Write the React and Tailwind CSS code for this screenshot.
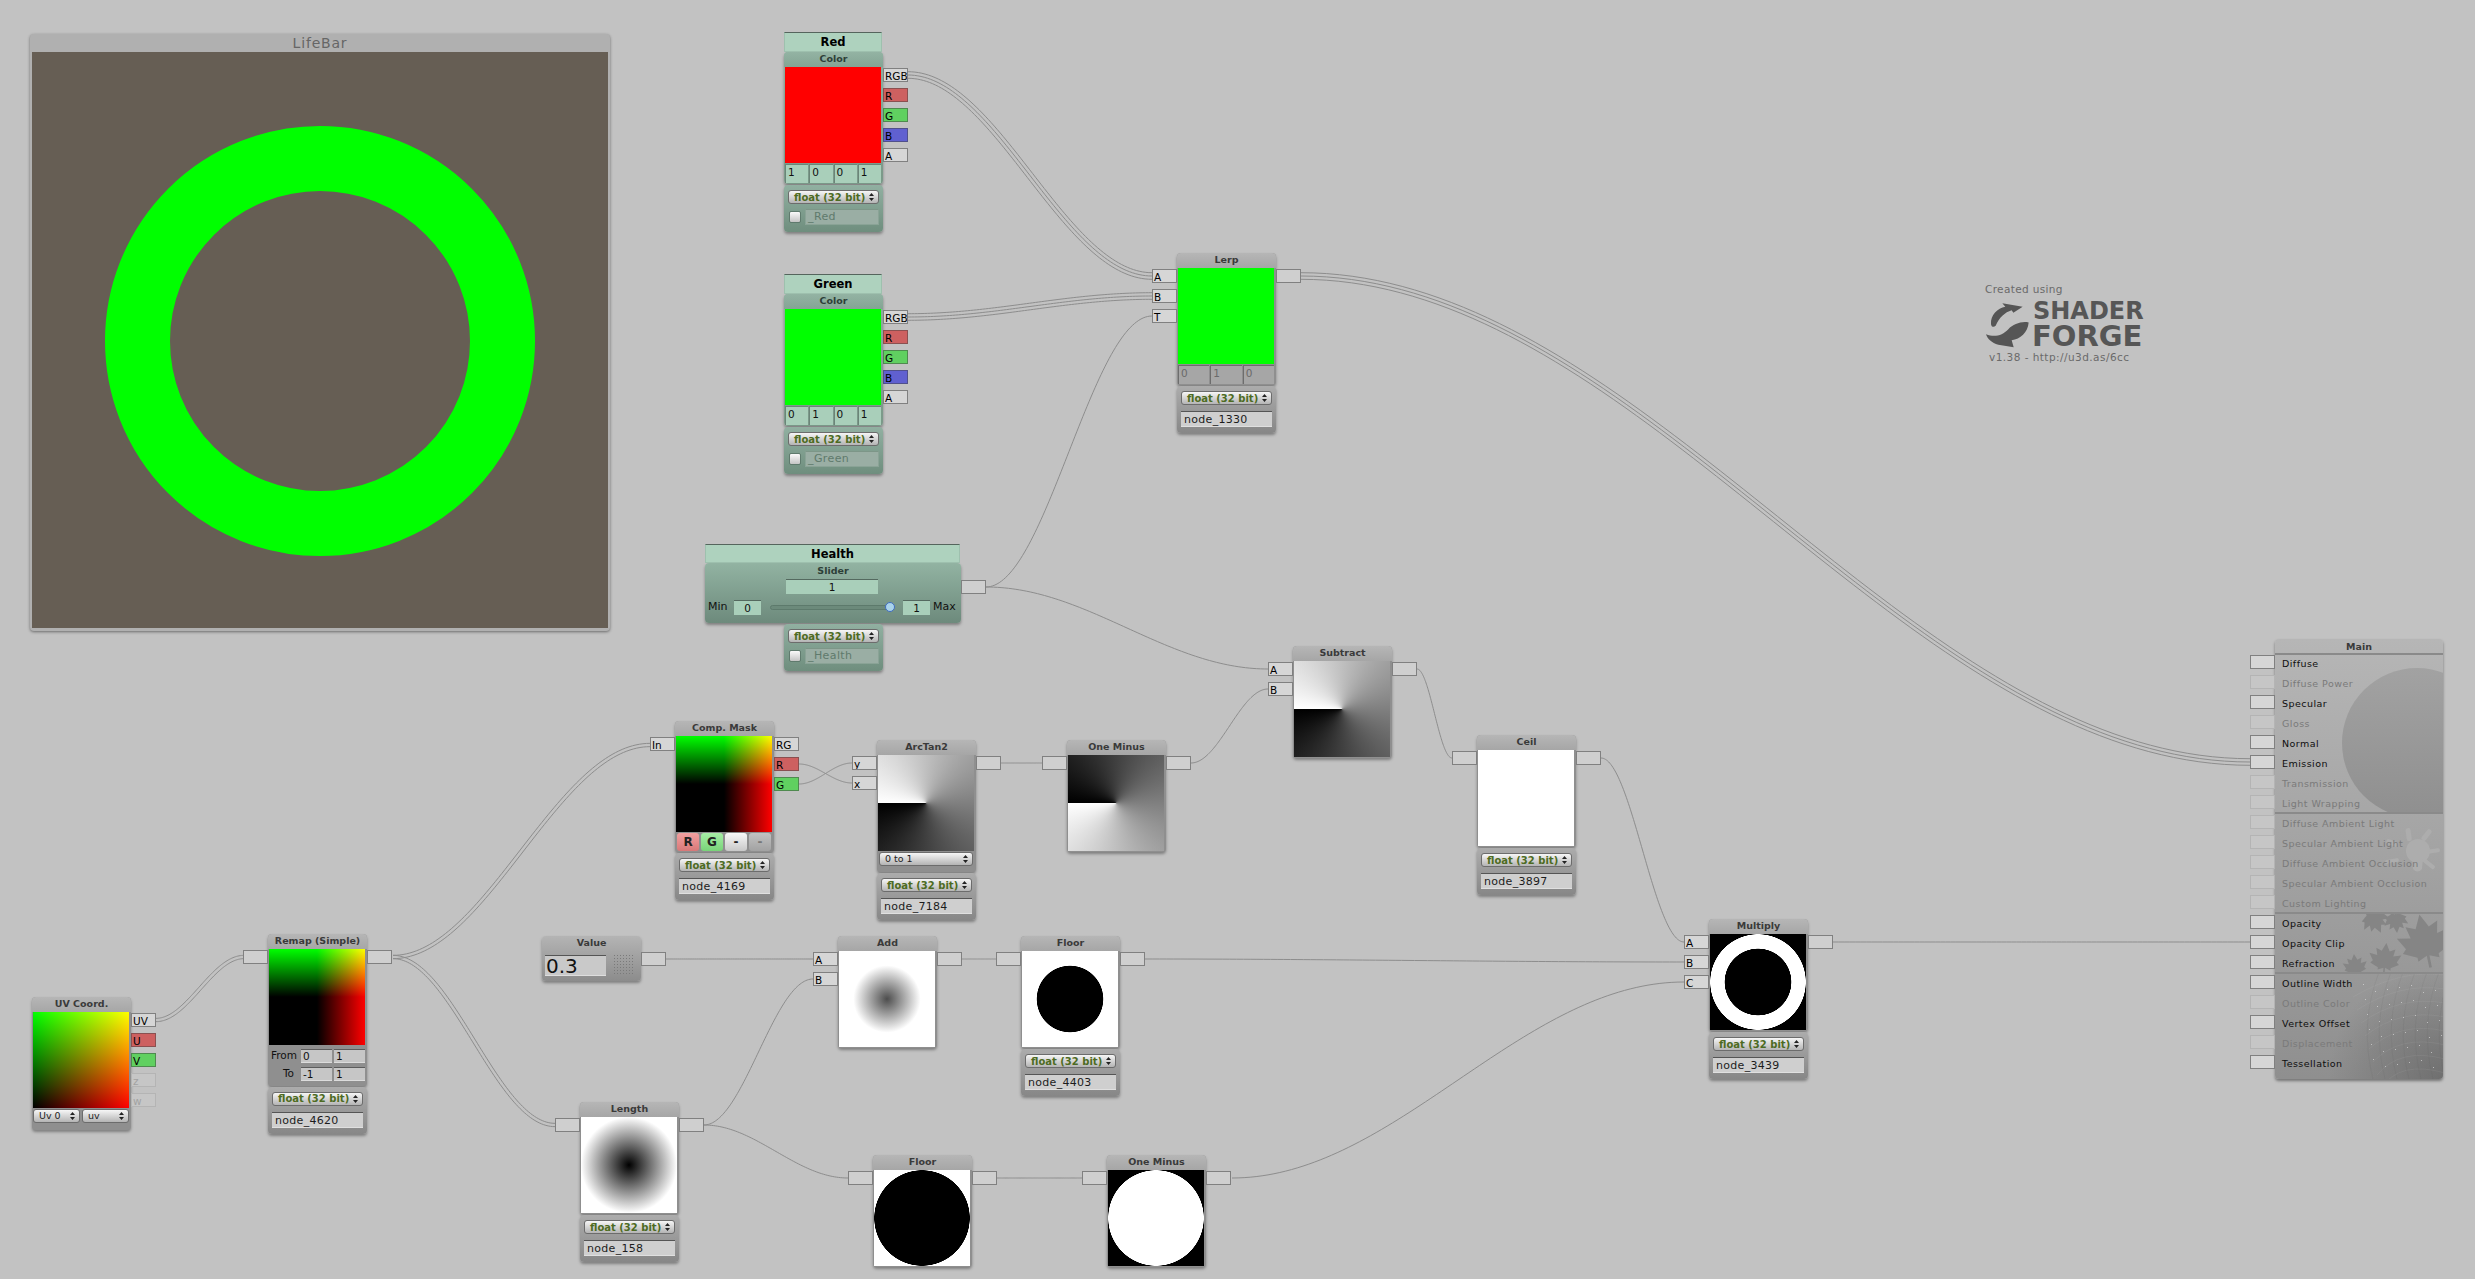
import React from 'react';

function wirePoints(x1, y1, x2, y2) {
  const k = (x2 - x1) * 0.36;
  const out = [];
  for (let i = 0; i <= 80; i++) {
    const t = i / 80, u = 1 - t;
    const x = u*u*u*x1 + 3*u*u*t*(x1+k) + 3*u*t*t*(x2-k) + t*t*t*x2;
    const y = u*u*u*y1 + 3*u*u*t*y1 + 3*u*t*t*y2 + t*t*t*y2;
    const dx = 3*u*u*k + 6*u*t*(x2-k-x1-k) + 3*t*t*k;
    const dy = 6*u*t*(y2-y1);
    const l = Math.hypot(dx, dy) || 1;
    out.push([x, y, -dy/l, dx/l]);
  }
  return out;
}

function Wire({ a, b, n = 1 }) {
  const pts = wirePoints(a[0], a[1], b[0], b[1]);
  const gap = 3.3;
  return Array.from({ length: n }, (_, j) => {
    const off = (j - (n - 1) / 2) * gap;
    const d = pts.map((p, i) => `${i ? 'L' : 'M'}${(p[0]+p[2]*off).toFixed(2)} ${(p[1]+p[3]*off).toFixed(2)}`).join(' ');
    return <path key={j} d={d} fill="none" stroke="#8d8d8d" strokeWidth="1" />;
  });
}

const WIRES = [
  [[908,75],[1152,276],3],[[908,317],[1152,296],3],[[986,587],[1152,316],1],[[986,587],[1268,669],1],
  [[1301,276],[2250,762],3],[[156,1020],[244,957],2],[[393,957],[650,745],2],[[393,957],[555,1125],2],
  [[799,764],[852,783],1],[[799,784],[852,763],1],[[1001,763],[1042,763],1],[[1191,763],[1268,689],1],
  [[1417,669],[1452,758],1],[[1601,758],[1684,942],1],[[666,959],[813,959],1],[[704,1125],[813,979],1],
  [[704,1125],[848,1178],1],[[961,959],[996,959],1],[[1145,959],[1684,962],1],[[997,1178],[1082,1178],1],
  [[1232,1178],[1684,982],1],[[1833,942],[2250,942],1],
];

const PORT_COLORS = {
  w: 'bg-[#d6d6d6] border-[#808080] text-black',
  r: 'bg-[#cd6060] border-[#8a5050] text-black',
  g: 'bg-[#60d060] border-[#4f8a4f] text-black',
  b: 'bg-[#6060d0] border-[#50508a] text-black',
  f: 'bg-[#c6c6c6] border-[#b4b4b4] text-[#a2a2a2]',
  d: 'bg-[#cfcfcf] border-[#808080] text-black',
};

function Port({ label = '', kind = 'd' }) {
  return (
    <div className={`w-[25px] h-[14px] border ${PORT_COLORS[kind]} text-[10.5px] leading-[15px] pl-[1px] overflow-hidden box-border`}>
      {label}
    </div>
  );
}

function Ports({ items, side }) {
  return (
    <div className={side === 'in' ? 'absolute right-full top-[16px] flex flex-col gap-[6px]' : 'absolute left-full top-[16px] flex flex-col gap-[6px]'}>
      {items.map((p, i) => <Port key={i} label={p[0]} kind={p[1]} />)}
    </div>
  );
}

function Arrows({ className = '' }) {
  return (
    <svg width="5" height="8" viewBox="0 0 5 8" className={className}>
      <path d="M2.5 0 L5 3 H0 Z M2.5 8 L0 5 H5 Z" fill="#222" />
    </svg>
  );
}

function Select({ children, className = '', green }) {
  return (
    <div className={`h-[14px] rounded-[3px] border border-[#6c6c6c] bg-[linear-gradient(#f6f6f6,#b4b4b4)] flex items-center justify-between pr-[4px] box-border ${className} ${green ? 'text-[#4d6b22] font-bold text-[10px] pl-[5px]' : 'text-[#222] text-[9.5px] pl-[5px]'}`}>
      <span className="whitespace-nowrap">{children}</span>
      <Arrows />
    </div>
  );
}

function FloatPanel({ name, prop }) {
  const skin = prop
    ? 'bg-[linear-gradient(#91b0a1,#6f8e7e)]'
    : 'bg-[linear-gradient(#acacac,#878787)]';
  return (
    <div className={`h-[47px] w-[99px] mt-px rounded-[4px] pt-[5px] px-[4px] box-border shadow-[0_2px_3px_rgba(0,0,0,0.35)] ${skin}`}>
      <Select green>float (32 bit)</Select>
      {prop ? (
        <div className="mt-[5px] flex items-center gap-[4px] pl-[1px]">
          <div className="w-[12px] h-[12px] rounded-[2px] border border-[#5f7a6d] bg-[linear-gradient(#fafafa,#c4c4c4)] box-border" />
          <div className="w-[74px] h-[16px] bg-[#9aaea4] border border-[#8aa396] border-t-[#7d9688] text-[#5f7a6c] text-[11px] leading-[14px] pl-[2px] tracking-[0.4px] box-border">{name}</div>
        </div>
      ) : (
        <div className="mt-[6px] h-[16px] bg-[#cfcfcf] border-t border-t-[#555] border-b border-b-[#e0e0e0] text-[#1c1c1c] text-[11px] leading-[15px] pl-[3px] tracking-[0.3px] box-border">{name}</div>
      )}
    </div>
  );
}

function Title({ children, prop }) {
  return (
    <div className={`h-[15px] rounded-t-[4px] text-center text-[9.5px] font-bold leading-[14px] ${prop ? 'bg-[linear-gradient(#93b3a3,#84a494)] text-[#2e3f38]' : 'bg-[linear-gradient(#b6b6b6,#a6a6a6)] text-[#3a3a3a]'}`}>{children}</div>
  );
}

function Node({ pos, title, ins, outs, image, children, panel, prop, label }) {
  return (
    <div className={`absolute w-[99px] ${pos}`}>
      {label && (
        <div className="absolute bottom-full left-0 w-[98px] h-[20px] border border-[#9ec0ae] border-t-[#55655d] bg-[#aed2be] text-center text-[11.5px] font-bold text-black leading-[19px] box-border">{label}</div>
      )}
      <div className={`rounded-[4px] pb-px shadow-[0_2px_3px_rgba(0,0,0,0.35)] ${prop ? 'bg-[linear-gradient(#8faf9f,#7a9888)]' : 'bg-[#8f8f8f]'}`}>
        <Title prop={prop}>{title}</Title>
        <div className={`ml-px w-[96px] h-[96px] relative overflow-hidden ${image}`} />
        {children}
      </div>
      {ins && <Ports items={ins} side="in" />}
      {outs && <Ports items={outs} side="out" />}
      {panel && <FloatPanel name={panel} prop={prop} />}
    </div>
  );
}

function Cells({ vals, prop }) {
  return (
    <div className="ml-px h-[20px] flex gap-px pt-px">
      {vals.map((v, i) => (
        <div key={i} className={`flex-1 h-[19px] border-t border-l box-border text-[10.5px] leading-[15px] pl-[2px] ${prop ? 'bg-[#a9cfba] border-[#6b8578] text-[#111]' : 'bg-[#a6a6a6] border-[#6d6d6d] text-[#6a6a6a]'} ${i === vals.length - 1 ? 'mr-[2px]' : ''}`}>{v}</div>
      ))}
    </div>
  );
}

function Field({ children, className = '' }) {
  return <div className={`h-[14px] bg-[#c6c6c6] border-t border-t-[#5c5c5c] border-b border-b-[#dcdcdc] text-[#111] text-[10.5px] leading-[13px] pl-[2px] box-border ${className}`}>{children}</div>;
}

function MaskBtn({ label, skin }) {
  return <div className={`w-[22px] h-[18px] rounded-[3px] text-center font-bold text-[12px] leading-[18px] text-[#222] ${skin}`}>{label}</div>;
}

const IMG = {
  uv: 'bg-[linear-gradient(to_right,#000,#f00),linear-gradient(to_top,#000,#0f0)] bg-blend-screen',
  remap: 'bg-[linear-gradient(to_right,#000_50%,#f00),linear-gradient(to_top,#000_50%,#0f0)] bg-blend-screen',
  red: 'bg-[#ff0000]',
  green: 'bg-[#00ff00]',
  white: 'bg-white',
  atan: 'bg-[conic-gradient(from_270deg,#fff,#000)]',
  oneMinus: 'bg-[conic-gradient(from_270deg,#000,#fff)]',
  length: 'bg-[radial-gradient(circle_48px,#000,#fff)]',
  add: 'bg-[radial-gradient(circle_33.6px,#4d4d4d,#fff)]',
  floor: 'bg-[radial-gradient(circle_33.6px,#000_98%,#fff_100%)]',
  floor2: 'bg-[radial-gradient(circle_48px,#000_99%,#fff_100%)]',
  om2: 'bg-[radial-gradient(circle_48px,#fff_99%,#000_100%)]',
  ring: 'bg-[radial-gradient(circle_48px,#000_69%,#fff_70%,#fff_99%,#000_100%)]',
};

const MAIN_ROWS = [
  ['Diffuse', 1], ['Diffuse Power', 0], ['Specular', 1], ['Gloss', 0], ['Normal', 1], ['Emission', 1], ['Transmission', 0], ['Light Wrapping', 0],
  ['Diffuse Ambient Light', 0], ['Specular Ambient Light', 0], ['Diffuse Ambient Occlusion', 0], ['Specular Ambient Occlusion', 0], ['Custom Lighting', 0],
  ['Opacity', 1], ['Opacity Clip', 1], ['Refraction', 1], ['Outline Width', 1], ['Outline Color', 0], ['Vertex Offset', 1], ['Displacement', 0], ['Tessellation', 1],
];

const LEAF = 'M0,-20 L5,-10 L12,-13 L10,-4 L20,-6 L15,3 L18,6 L8,11 L8,14 L1,11 L1,20 L-1,20 L-1,11 L-8,14 L-8,11 L-18,6 L-15,3 L-20,-6 L-10,-4 L-12,-13 L-5,-10 Z';

function MainArt() {
  const meshLines = [];
  for (let i = 0; i < 9; i++) {
    const y = 340 + i * 13;
    meshLines.push(<path key={`h${i}`} d={`M${78 + i * 4} ${y + 18} Q 125 ${y - 10} 170 ${y - 4 + i}`} fill="none" stroke="#c8c8c8" strokeOpacity="0.18" strokeWidth="0.6" />);
    const x = 90 + i * 12;
    meshLines.push(<path key={`v${i}`} d={`M${x + 14} 333 Q ${x - 6} 385 ${x + 8} 440`} fill="none" stroke="#555" strokeOpacity="0.16" strokeWidth="0.6" />);
    for (let j = 0; j < 6; j++) {
      meshLines.push(<rect key={`d${i}-${j}`} x={x + j * 2 - 2} y={345 + j * 15 + ((i * 7) % 9)} width="1" height="1" fill="#e6e6e6" fillOpacity="0.6" />);
    }
  }
  return (
    <svg width="168" height="440" viewBox="0 0 168 440" className="absolute left-0 top-0">
      <defs>
        <linearGradient id="sph" x1="0" y1="0" x2="0" y2="1">
          <stop offset="0" stopColor="#a2a2a2" /><stop offset="1" stopColor="#8f8f8f" />
        </linearGradient>
        <radialGradient id="dark" gradientUnits="userSpaceOnUse" cx="168" cy="440" r="115">
          <stop offset="0" stopColor="#6a6a6a" stopOpacity="0.85" /><stop offset="1" stopColor="#6a6a6a" stopOpacity="0" />
        </radialGradient>
        <clipPath id="c1"><rect x="0" y="15" width="168" height="158" /></clipPath>
        <clipPath id="c2"><rect x="0" y="275" width="168" height="58" /></clipPath>
        <clipPath id="c3"><rect x="0" y="335" width="168" height="105" /></clipPath>
      </defs>
      <g clipPath="url(#c1)"><circle cx="142" cy="104" r="75" fill="url(#sph)" /></g>
      <g fill="#adadad">
        <rect x="-9" y="-2.5" width="12" height="5" rx="2" transform="translate(120 205) rotate(20)" />
        <rect x="-2.5" y="-9" width="5" height="13" rx="2" transform="translate(134 198) rotate(-8)" />
        <rect x="-2.5" y="-9" width="5" height="13" rx="2" transform="translate(150 198) rotate(38)" />
        <rect x="-7" y="-2" width="14" height="4" rx="2" transform="translate(158 212) rotate(-8)" />
        <rect x="-7" y="-2" width="14" height="4" rx="2" transform="translate(154 225) rotate(38)" />
        <rect x="-7" y="-2" width="14" height="4" rx="2" transform="translate(117 222) rotate(-10)" />
        <circle cx="143" cy="212" r="12" />
        <path d="M137 218 h11 l-1 12 q-4.5 5 -9 0 Z" />
      </g>
      <g fill="#858585" clipPath="url(#c2)">
        <path d={LEAF} transform="translate(150 302) rotate(-12) scale(1.35)" />
        <path d={LEAF} transform="translate(100 281) rotate(155) scale(0.7)" />
        <path d={LEAF} transform="translate(121 282) rotate(175) scale(0.6)" />
        <path d={LEAF} transform="translate(110 320) rotate(5) scale(0.8)" />
        <path d={LEAF} transform="translate(80 327) rotate(-5) scale(0.6)" />
      </g>
      <g clipPath="url(#c3)">
        <rect x="0" y="333" width="168" height="107" fill="url(#dark)" />
        {meshLines}
      </g>
    </svg>
  );
}

function MainNode() {
  return (
    <div className="absolute left-[2275px] top-[639px] w-[168px]">
      <div className="relative h-[440px] rounded-[4px] overflow-hidden bg-[linear-gradient(#b6b6b6,#8f8f8f)] shadow-[0_2px_3px_rgba(0,0,0,0.4)]">
        <MainArt />
        <div className="relative h-[15px] text-center text-[9.5px] font-bold leading-[15px] text-[#3a3a3a]">Main</div>
        <div className="absolute left-0 right-0 top-[14px] h-[2px] bg-[#8a8a8a]" />
        <div className="absolute left-0 right-0 top-[173px] h-[2px] bg-[#8a8a8a]" />
        <div className="absolute left-0 right-0 top-[273px] h-[2px] bg-[#8a8a8a]" />
        <div className="absolute left-0 right-0 top-[333px] h-[2px] bg-[#8a8a8a]" />
        <div className="relative flex flex-col pl-[7px]">
          {MAIN_ROWS.map(([t, on]) => (
            <div key={t} className={`h-[20px] text-[9.5px] leading-[19px] tracking-[0.45px] whitespace-nowrap ${on ? 'text-[#0e0e0e]' : 'text-[#7a7a7a]'}`}>{t}</div>
          ))}
        </div>
      </div>
      <div className="absolute right-full top-[16px] flex flex-col gap-[6px]">
        {MAIN_ROWS.map(([t, on]) => <Port key={t} kind={on ? 'w' : 'f'} />)}
      </div>
    </div>
  );
}

function Logo() {
  return (
    <div className="absolute left-[1985px] top-[283px] w-[160px] text-[#565656]">
      <div className="text-[10.5px] leading-[13px] text-[#6a6a6a] tracking-[0.35px]">Created using</div>
      <div className="relative h-[48px] mt-[4px]">
        <svg width="44" height="46" viewBox="70 95 132 135" className="absolute left-0 top-[2px]">
          <path fill="#555" d="M88 160 C86 132 108 113 131 108 L122 97 L183 108 L155 126 L150 118 C130 124 112 140 102 165 C96 170 89 168 88 160 Z" />
          <path fill="#555" d="M73 190 C100 201 122 193 140 175 C155 160 180 150 201 155 C198 186 176 205 150 208 L156 229 L110 222 C90 215 78 205 73 190 Z" />
        </svg>
        <div className="absolute left-[48px] top-[1px] text-[24px] leading-[20px] font-bold">SHADER</div>
        <div className="absolute left-[47px] top-[24px] text-[29px] leading-[24px] font-bold">FORGE</div>
      </div>
      <div className="mt-[3px] ml-[4px] text-[10.5px] leading-[12px] text-[#6a6a6a] whitespace-nowrap tracking-[0.45px]">v1.38 - http://u3d.as/6cc</div>
    </div>
  );
}

export default function App() {
  return (
    <div className="relative w-[2475px] h-[1279px] overflow-hidden bg-[#c2c2c2] [font-family:'DejaVu_Sans',sans-serif]">
      <svg width="2475" height="1279" className="absolute left-0 top-0">
        {WIRES.map((w, i) => <Wire key={i} a={w[0]} b={w[1]} n={w[2]} />)}
      </svg>

      {/* Preview window */}
      <div className="absolute left-[30px] top-[34px] w-[580px] h-[597px] rounded-[4px] bg-[#b0b0b0] shadow-[0_1px_3px_rgba(0,0,0,0.45)] px-[2px]">
        <div className="h-[18px] text-center text-[14px] leading-[18px] text-[#666666] tracking-[0.8px]">LifeBar</div>
        <svg width="576" height="576" className="block bg-[#665e54]">
          <circle cx="288" cy="289" r="182.5" fill="none" stroke="#00ff00" strokeWidth="65" />
        </svg>
      </div>

      <Node pos="left-[784px] top-[52px]" label="Red" title="Color" prop image={IMG.red}
        outs={[['RGB','w'],['R','r'],['G','g'],['B','b'],['A','w']]} panel="_Red">
        <Cells vals={['1','0','0','1']} prop />
      </Node>
      <Node pos="left-[784px] top-[294px]" label="Green" title="Color" prop image={IMG.green}
        outs={[['RGB','w'],['R','r'],['G','g'],['B','b'],['A','w']]} panel="_Green">
        <Cells vals={['0','1','0','1']} prop />
      </Node>

      <Node pos="left-[1177px] top-[253px]" title="Lerp" image={IMG.green} ins={[['A','w'],['B','w'],['T','w']]} outs={[['','d']]} panel="node_1330">
        <Cells vals={['0','1','0']} />
      </Node>

      {/* Health slider */}
      <div className="absolute left-[705px] top-[563px] w-[256px]">
        <div className="absolute bottom-full left-0 w-[255px] h-[19px] border border-[#9ec0ae] border-t-[#55655d] bg-[#aed2be] text-center text-[11.5px] font-bold text-black leading-[18px] box-border">Health</div>
        <div className="h-[60px] rounded-[4px] bg-[linear-gradient(#92b3a2,#6d8a7c)] shadow-[0_2px_3px_rgba(0,0,0,0.35)]">
          <div className="h-[15px] text-center text-[9.5px] font-bold leading-[16px] text-[#2e3f38]">Slider</div>
          <div className="ml-[81px] mt-px w-[92px] h-[15px] bg-[#a9cfba] border-t border-t-[#54695f] text-center text-[10.5px] leading-[14px] text-[#111] box-border">1</div>
          <div className="flex items-center mt-[5px] pl-[3px] text-[11px] text-[#111]">
            <span className="w-[26px]">Min</span>
            <div className="w-[27px] h-[15px] bg-[#a9cfba] border-t border-t-[#54695f] text-center text-[10.5px] leading-[14px] box-border">0</div>
            <div className="relative ml-[9px] w-[124px] h-[5px] rounded-full bg-[#6c8a7b] border border-[#5d7a6c] box-border">
              <div className="absolute right-[-2px] top-[-4px] w-[10px] h-[10px] rounded-full bg-[#a9d3ea] border border-[#3f6cc0] box-border" />
            </div>
            <div className="ml-[9px] w-[27px] h-[15px] bg-[#a9cfba] border-t border-t-[#54695f] text-center text-[10.5px] leading-[14px] box-border">1</div>
            <span className="ml-[3px]">Max</span>
          </div>
        </div>
        <div className="absolute left-full top-[17px]"><Port /></div>
        <div className="ml-[79px]"><FloatPanel name="_Health" prop /></div>
      </div>

      <Node pos="left-[32px] top-[997px]" title="UV Coord." image={IMG.uv} outs={[['UV','w'],['U','r'],['V','g'],['z','f'],['w','f']]}>
        <div className="flex gap-[2px] ml-px mt-px mb-[6px] mr-[2px]">
          <Select className="w-[47px]">Uv 0</Select>
          <Select className="w-[47px]">uv</Select>
        </div>
      </Node>

      <Node pos="left-[268px] top-[934px]" title="Remap (Simple)" image={IMG.remap} ins={[['','d']]} outs={[['','d']]} panel="node_4620">
        <div className="pt-[3px] pb-[3px] flex flex-col gap-[2px] text-[10.5px] text-[#111]">
          <div className="flex items-center">
            <span className="w-[33px] pl-[3px]">From</span>
            <Field className="w-[31px] mr-[2px]">0</Field><Field className="w-[31px]">1</Field>
          </div>
          <div className="flex items-center">
            <span className="w-[33px] pr-[7px] text-right">To</span>
            <Field className="w-[31px] mr-[2px]">-1</Field><Field className="w-[31px]">1</Field>
          </div>
        </div>
      </Node>

      <Node pos="left-[675px] top-[721px]" title="Comp. Mask" image={IMG.remap} ins={[['In','w']]} outs={[['RG','w'],['R','r'],['G','g']]} panel="node_4169">
        <div className="h-[19px] flex gap-[2px] ml-[2px] pt-px">
          <MaskBtn label="R" skin="bg-[linear-gradient(#f2a0a0,#d87878)]" />
          <MaskBtn label="G" skin="bg-[linear-gradient(#a6eea6,#78d478)]" />
          <MaskBtn label="-" skin="bg-[linear-gradient(#f8f8f8,#c8c8c8)]" />
          <MaskBtn label="-" skin="bg-[linear-gradient(#c2c2c2,#a2a2a2)] text-[#777]" />
        </div>
      </Node>

      <Node pos="left-[877px] top-[740px]" title="ArcTan2" image={IMG.atan} ins={[['y','w'],['x','w']]} outs={[['','d']]} panel="node_7184">
        <div className="ml-[2px] mr-[3px] mt-px mb-[5px]"><Select>0 to 1</Select></div>
      </Node>

      <Node pos="left-[1067px] top-[740px]" title="One Minus" image={IMG.oneMinus} ins={[['','d']]} outs={[['','d']]} />
      <Node pos="left-[1293px] top-[646px]" title="Subtract" image={IMG.atan} ins={[['A','w'],['B','w']]} outs={[['','d']]} />
      <Node pos="left-[1477px] top-[735px]" title="Ceil" image={IMG.white} ins={[['','d']]} outs={[['','d']]} panel="node_3897" />
      <Node pos="left-[1709px] top-[919px]" title="Multiply" image={IMG.ring} ins={[['A','w'],['B','w'],['C','w']]} outs={[['','d']]} panel="node_3439" />

      {/* Value */}
      <div className="absolute left-[542px] top-[936px] w-[99px] h-[45px] rounded-[4px] bg-[linear-gradient(#b4b4b4,#8c8c8c)] shadow-[0_2px_3px_rgba(0,0,0,0.35)]">
        <div className="h-[15px] text-center text-[9.5px] font-bold leading-[14px] text-[#3a3a3a]">Value</div>
        <div className="mt-[4px] flex ml-[3px]">
          <div className="w-[61px] h-[21px] bg-[#c9c9c9] border-t border-t-[#555] border-b border-b-[#dedede] text-[20px] leading-[20px] pl-[1px] text-[#111] box-border">0.3</div>
          <svg width="20" height="20" className="ml-[8px]">
            <defs><pattern id="dots" width="3" height="3" patternUnits="userSpaceOnUse"><rect width="1" height="1" fill="#7a7a7a" /></pattern></defs>
            <rect width="20" height="20" fill="url(#dots)" />
          </svg>
        </div>
        <div className="absolute left-full top-[16px]"><Port /></div>
      </div>

      <Node pos="left-[838px] top-[936px]" title="Add" image={IMG.add} ins={[['A','w'],['B','w']]} outs={[['','d']]} />
      <Node pos="left-[1021px] top-[936px]" title="Floor" image={IMG.floor} ins={[['','d']]} outs={[['','d']]} panel="node_4403" />
      <Node pos="left-[580px] top-[1102px]" title="Length" image={IMG.length} ins={[['','d']]} outs={[['','d']]} panel="node_158" />
      <Node pos="left-[873px] top-[1155px]" title="Floor" image={IMG.floor2} ins={[['','d']]} outs={[['','d']]} />
      <Node pos="left-[1107px] top-[1155px]" title="One Minus" image={IMG.om2} ins={[['','d']]} outs={[['','d']]} />

      <MainNode />
      <Logo />
    </div>
  );
}
